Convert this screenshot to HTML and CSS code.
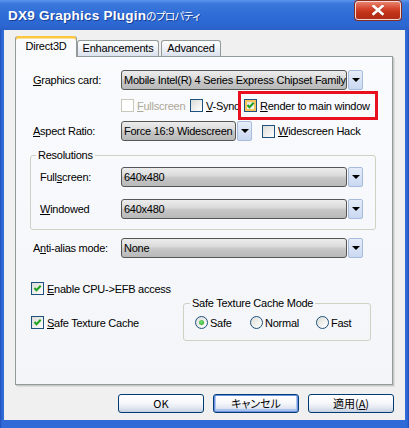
FILE: index.html
```html
<!DOCTYPE html>
<html>
<head>
<meta charset="utf-8">
<link rel="stylesheet" href="styles.css">
</head>
<body>
<div class="window">
  <div class="titlebar">
    <span class="title">DX9 Graphics Plugin<span class="jp">のプロパティ</span></span>
    <div class="close"><svg width="12" height="11" viewBox="0 0 12 11"><path d="M1.5 1.5 L10.5 9.5 M10.5 1.5 L1.5 9.5" stroke="#5a2a20" stroke-width="3.4" stroke-linecap="square" opacity="0.35"/><path d="M1.5 1 L10.5 9 M10.5 1 L1.5 9" stroke="#fff" stroke-width="2.6" stroke-linecap="square"/></svg></div>
  </div>
  <div class="frame">
    <div class="client">
      <div class="tabs">
        <div class="tab active">Direct3D</div>
        <div class="tab t-enh">Enhancements</div>
        <div class="tab t-adv">Advanced</div>
      </div>
      <div class="panel">
        <div class="row r1">
          <span class="lbl"><u>G</u>raphics card:</span>
          <div class="combo wide"><div class="ctext">Mobile Intel(R) 4 Series Express Chipset Family</div><div class="cbtn"></div></div>
        </div>
        <div class="row r2">
          <span class="chk disabled i-full"><span class="box"></span><span><u>F</u>ullscreen</span></span>
          <span class="chk i-vsync"><span class="box"></span><span><u>V</u>-Sync</span></span>
          <span class="chk hl"><span class="box hot"><svg width="11" height="11" viewBox="0 0 11 11"><path d="M2.5 5 L4.5 7.3 L8.7 2.8" stroke="#21a121" stroke-width="2" fill="none"/></svg></span><span><u>R</u>ender to main window</span></span>
        </div>
        <div class="row r3">
          <span class="lbl"><u>A</u>spect Ratio:</span>
          <div class="combo narrow"><div class="ctext">Force 16:9 Widescreen</div><div class="cbtn"></div></div>
          <span class="chk ws"><span class="box"></span><span><u>W</u>idescreen Hack</span></span>
        </div>
        <fieldset class="group res">
          <legend>Resolutions</legend>
          <div class="row">
            <span class="lbl sub">Full<u>s</u>creen:</span>
            <div class="combo wide"><div class="ctext">640x480</div><div class="cbtn"></div></div>
          </div>
          <div class="row r-win">
            <span class="lbl sub"><u>W</u>indowed</span>
            <div class="combo wide"><div class="ctext">640x480</div><div class="cbtn"></div></div>
          </div>
        </fieldset>
        <div class="row r5">
          <span class="lbl">A<u>n</u>ti-alias mode:</span>
          <div class="combo wide"><div class="ctext">None</div><div class="cbtn"></div></div>
        </div>
        <div class="row r6">
          <span class="chk left"><span class="box"><svg width="11" height="11" viewBox="0 0 11 11"><path d="M2.5 5 L4.5 7.3 L8.7 2.8" stroke="#21a121" stroke-width="2" fill="none"/></svg></span><span><u>E</u>nable CPU-&gt;EFB access</span></span>
        </div>
        <div class="row r7">
          <span class="chk left stc"><span class="box"><svg width="11" height="11" viewBox="0 0 11 11"><path d="M2.5 5 L4.5 7.3 L8.7 2.8" stroke="#21a121" stroke-width="2" fill="none"/></svg></span><span><u>S</u>afe Texture Cache</span></span>
          <fieldset class="group mode">
            <legend>Safe Texture Cache Mode</legend>
            <div class="radios">
              <span class="rad r-safe"><span class="circle on"></span><span>Safe</span></span>
              <span class="rad r-norm"><span class="circle"></span><span>Normal</span></span>
              <span class="rad"><span class="circle"></span><span>Fast</span></span>
            </div>
          </fieldset>
        </div>
      </div>
      <div class="buttons">
        <div class="btn">OK</div>
        <div class="btn default">キャンセル</div>
        <div class="btn">適用(<u>A</u>)</div>
      </div>
    </div>
  </div>
</div>
</body>
</html>
```

FILE: styles.css
```css
html, body {
  margin: 0;
  padding: 0;
}
body {
  width: 409px;
  height: 428px;
  overflow: hidden;
  font-family: "Liberation Sans", Arial, sans-serif;
  font-size: 11px;
  color: #000;
  background: #2b63cf;
}
.window {
  width: 409px;
  height: 428px;
  display: flex;
  flex-direction: column;
}
.titlebar {
  height: 30px;
  flex: none;
  display: flex;
  align-items: center;
  padding-left: 8px;
  background: linear-gradient(#5b97ee 0%, #3a78dc 12%, #2f6cd6 50%, #2b66d1 85%, #2a60c8 100%);
}
.title {
  color: #fff;
  font-weight: bold;
  font-size: 13.5px;
  text-shadow: 1px 1px 0 #1a3f95;
  letter-spacing: 0.25px;
}
.title .jp {
  font-family: "Noto Sans CJK JP", sans-serif;
  font-weight: normal;
  font-size: 10.5px;
  letter-spacing: -0.6px;
  font-feature-settings: "palt";
}
.close {
  margin-left: auto;
  margin-right: 8px;
  align-self: flex-start;
  margin-top: 1px;
  width: 46px;
  height: 19px;
  box-sizing: border-box;
  border: 1px solid #f2d9d4;
  border-radius: 3px;
  background: linear-gradient(#e8826e 0%, #d4452c 40%, #c23418 60%, #b02c14 100%);
  display: flex;
  align-items: center;
  justify-content: center;
  box-shadow: 0 0 0 1px #8a2a1a;
}
.frame {
  flex: 1;
  display: flex;
  padding: 0 4px 8px;
  background: linear-gradient(90deg, #1e4fb8 0, #2f6ad6 2px, #2f6ad6 calc(100% - 2px), #1e4fb8 100%);
}
.client {
  flex: 1;
  background: #f0f0f0;
  padding: 5px 11px 0 11px;
  display: flex;
  flex-direction: column;
}
.tabs {
  display: flex;
  align-items: flex-end;
  height: 22px;
  margin-bottom: -1px;
  position: relative;
  z-index: 1;
  letter-spacing: -0.2px;
}
.tab {
  box-sizing: border-box;
  height: 16px;
  margin-bottom: 1px;
  border: 1px solid #919b9c;
  border-bottom: none;
  border-radius: 3px 3px 0 0;
  background: linear-gradient(#ffffff, #eef1f6 50%, #dbe2ee);
  text-align: center;
  line-height: 15px;
}
.tab.active {
  width: 62px;
  height: 21px;
  margin-bottom: 0;
  line-height: 17px;
  background: linear-gradient(#fcfcfe, #f9fafc);
  border-top: none;
  box-shadow: inset 0 2px 0 #ffc83c, inset 0 3px 0 #f8dfa0;
  padding-top: 2px;
}
.t-enh {
  width: 82px;
}
.t-adv {
  width: 60px;
  margin-left: 2px;
}
.panel {
  box-sizing: border-box;
  width: 378px;
  height: 329px;
  border: 1px solid #919b9c;
  background: linear-gradient(#fafbfd, #f4f5f9);
  padding: 13px 16px 0 17px;
  box-shadow: 1px 1px 0 #c9c9c9, 2px 2px 0 #dddddd;
  display: flex;
  flex-direction: column;
  letter-spacing: -0.25px;
}
.row {
  display: flex;
  align-items: center;
}
.lbl {
  width: 88px;
  flex: none;
}
.lbl.sub {
  width: 81px;
}
.r1 { height: 20px; }
.r2 {
  height: 15px;
  margin-top: 8px;
  padding-left: 88px;
}
.r3 {
  height: 20px;
  margin-top: 8px;
}
.combo {
  display: flex;
  height: 20px;
  flex: none;
}
.combo.wide { width: 242px; }
.combo.narrow { width: 131px; }
.ctext {
  flex: 1;
  min-width: 0;
  box-sizing: border-box;
  border: 1px solid #555;
  border-radius: 3px;
  background: linear-gradient(#ececec 0%, #dcdcdc 40%, #c6c6c6 55%, #b9b9b9 100%);
  padding-left: 2px;
  line-height: 18px;
  white-space: nowrap;
  overflow: hidden;
}
.cbtn {
  width: 15px;
  flex: none;
  margin-left: 1px;
  box-sizing: border-box;
  border: 1px solid #a9bbdc;
  border-radius: 2px;
  background: linear-gradient(#e6edf9, #c9d8f1);
  display: flex;
  align-items: center;
  justify-content: center;
}
.cbtn::after {
  content: "";
  border-left: 4px solid transparent;
  border-right: 4px solid transparent;
  border-top: 4px solid #000;
}
.chk {
  display: inline-flex;
  align-items: center;
  gap: 3px;
  flex: none;
  white-space: nowrap;
  height: 15px;
}
.box {
  width: 13px;
  height: 13px;
  box-sizing: border-box;
  border: 1px solid #1c5180;
  background: linear-gradient(135deg, #dcdcd7 0%, #f4f4f2 70%, #ffffff 100%);
  display: flex;
  align-items: center;
  justify-content: center;
  flex: none;
}
.box.hot {
  box-shadow: inset 0 0 0 2px #f9c45a;
}
.chk.disabled {
  color: #aca899;
}
.chk.disabled .box {
  border-color: #cac8bb;
  background: #fff;
}
.i-full { width: 69px; }
.i-vsync { width: 54px; }
.hl {
  box-sizing: border-box;
  width: 134px;
  height: 23px;
  margin: -4px 0 -4px -3px;
  padding-left: 3px;
  outline: 3px solid #e8101e;
}
.ws {
  margin-left: 10px;
}
.group {
  border: 1px solid #d0d0c4;
  border-radius: 3px;
  margin: 0;
  min-width: 0;
}
.group legend {
  padding: 0 2px;
  line-height: 13px;
  height: 13px;
}
.res {
  box-sizing: border-box;
  width: 346px;
  margin: 8px 0 0 -3px;
  padding: 5px 11px 10px 9px;
}
.res legend {
  margin-left: -4px;
}
.r-win {
  margin-top: 12px;
}
.res .row {
  height: 20px;
}
.r5 {
  height: 20px;
  margin-top: 8px;
}
.r6 {
  height: 15px;
  margin-top: 23px;
}
.chk.left {
  margin-left: -2px;
}
.r7 {
  align-items: flex-start;
  margin-top: 1px;
}
.stc {
  width: 152px;
  margin-top: 18px;
}
.mode {
  box-sizing: border-box;
  width: 188px;
  padding: 5px 6px 10px 11px;
}
.mode legend {
  margin-left: -5px;
}
.radios {
  display: flex;
  align-items: center;
  height: 15px;
}
.rad {
  display: inline-flex;
  align-items: center;
  gap: 2px;
  flex: none;
}
.r-safe { width: 55px; }
.r-norm { width: 66px; }
.circle {
  width: 13px;
  height: 13px;
  box-sizing: border-box;
  border-radius: 50%;
  border: 1px solid #1c5180;
  background: linear-gradient(135deg, #dcdcd7 0%, #f6f6f4 70%, #ffffff 100%);
  display: flex;
  align-items: center;
  justify-content: center;
}
.circle.on::after {
  content: "";
  width: 5px;
  height: 5px;
  border-radius: 50%;
  background: radial-gradient(circle at 40% 40%, #7be07b, #21a121);
}
.buttons {
  display: flex;
  justify-content: flex-end;
  gap: 9px;
  margin-top: 9px;
}
.btn {
  box-sizing: border-box;
  width: 86px;
  height: 19px;
  border: 1px solid #003c74;
  border-radius: 3px;
  background: linear-gradient(#ffffff 0%, #f7f8fb 45%, #e3e8f1 75%, #c6cfe0 100%);
  font-family: "Noto Sans CJK JP", "Liberation Sans", sans-serif;
  font-size: 11px;
  font-feature-settings: "palt";
  line-height: 17px;
  text-align: center;
}
.btn.default {
  box-shadow: inset 0 0 0 1px #6d93e0, inset 0 -1px 0 2px #aac3ef;
}
```
